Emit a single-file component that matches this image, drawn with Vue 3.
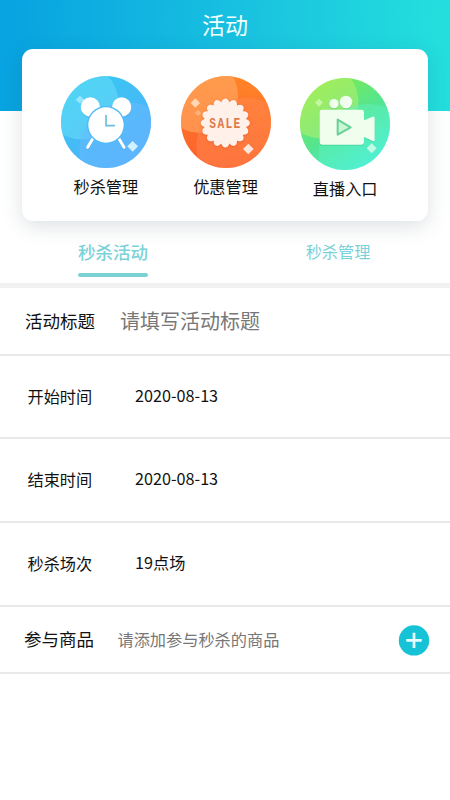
<script setup>
const rows = [
  { label: '开始时间', value: '2020-08-13' },
  { label: '结束时间', value: '2020-08-13' },
  { label: '秒杀场次', value: '19点场' },
]

const cx = 168
const cy = 171
const teeth = 16
const badgePath = (() => {
  const step = (Math.PI * 2) / teeth
  const p = (a, r) => `${(cx + r * Math.sin(a)).toFixed(1)} ${(cy - r * Math.cos(a)).toFixed(1)}`
  let d = `M${p(-step / 2, 63)}`
  for (let i = 0; i < teeth; i++) {
    const a = i * step
    d += `C${p(a - step * 0.24, 78)} ${p(a + step * 0.24, 78)} ${p(a + step / 2, 63)}`
  }
  return d + 'Z'
})()
</script>

<template>
  <div class="page">
    <header class="header">
      <h1 class="title">活动</h1>
    </header>

    <section class="card">
      <div class="entry">
        <svg class="icon" viewBox="33 32 270 276" preserveAspectRatio="none">
          <defs>
            <linearGradient id="blue" x1="0" y1="0" x2=".7" y2="1">
              <stop offset="0" stop-color="#2fcdf0" />
              <stop offset="1" stop-color="#55aefb" />
            </linearGradient>
            <clipPath id="clipA"><ellipse cx="168" cy="170" rx="135" ry="138" /></clipPath>
          </defs>
          <g clip-path="url(#clipA)">
            <rect x="33" y="32" width="270" height="276" fill="url(#blue)" />
            <circle cx="93" cy="110" r="112" fill="#7ae5fb" opacity=".4" />
            <circle cx="233" cy="256" r="145" fill="#67b9ff" opacity=".5" />
          </g>
          <path d="M90 91l13 12-13 12-13-12z" fill="#a5eaff" opacity=".85" />
          <path d="M248 227l16 16-16 16-16-16z" fill="#d1f1ff" />
          <g class="lift-blue">
            <circle cx="121" cy="125" r="29" fill="#fff" />
            <circle cx="215" cy="125" r="29" fill="#fff" />
            <path d="M130 217l-17 29M205 217l17 29" stroke="#fff" stroke-width="9" stroke-linecap="round" />
          </g>
          <circle cx="168" cy="179" r="57" fill="#4fbaf4" />
          <circle cx="168" cy="179" r="53" fill="#fff" />
          <path d="M168 149v32h27" fill="none" stroke="#69bfdc" stroke-width="5" />
        </svg>
        <span class="entry-label">秒杀管理</span>
      </div>

      <div class="entry">
        <svg class="icon" viewBox="35 30 270 276" preserveAspectRatio="none">
          <defs>
            <linearGradient id="orange" x1=".6" y1="0" x2=".5" y2="1">
              <stop offset="0" stop-color="#ff8428" />
              <stop offset="1" stop-color="#fc602c" />
            </linearGradient>
            <clipPath id="clipB"><ellipse cx="170" cy="168" rx="135" ry="138" /></clipPath>
          </defs>
          <g clip-path="url(#clipB)">
            <rect x="35" y="30" width="270" height="276" fill="url(#orange)" />
            <circle cx="93" cy="88" r="113" fill="#ffad67" opacity=".58" />
            <circle cx="228" cy="242" r="147" fill="#ff8750" opacity=".5" />
          </g>
          <path d="M78 97l14 14-14 14-14-14z" fill="#ffe3c8" opacity=".85" />
          <path d="M86 132l10 9-10 9-10-9z" fill="#ffd6b4" opacity=".45" />
          <path d="M237 233l16 16-16 16-16-16z" fill="#ffe6da" />
          <path :d="badgePath" class="lift-orange" fill="#fff1e9" />
          <text transform="translate(120 186) scale(.8 1.1)" class="sale">SALE</text>
        </svg>
        <span class="entry-label">优惠管理</span>
      </div>

      <div class="entry entry-low">
        <svg class="icon" viewBox="30 39 270 276" preserveAspectRatio="none">
          <defs>
            <linearGradient id="green" x1=".15" y1=".1" x2=".75" y2="1">
              <stop offset="0" stop-color="#80eb4c" />
              <stop offset=".5" stop-color="#54e591" />
              <stop offset="1" stop-color="#43efe1" />
            </linearGradient>
            <clipPath id="clipC"><ellipse cx="165" cy="177" rx="135" ry="138" /></clipPath>
          </defs>
          <g clip-path="url(#clipC)">
            <rect x="30" y="39" width="270" height="276" fill="url(#green)" />
            <circle cx="93" cy="108" r="112" fill="#c2f06c" opacity=".48" />
            <circle cx="232" cy="263" r="146" fill="#62f2c6" opacity=".4" />
          </g>
          <path d="M87 101l12 12-12 12-12-12z" fill="#cbf8ac" opacity=".85" />
          <path d="M245 235l15 15-15 15-15-15z" fill="#c1fbe8" />
          <g class="lift-green" fill="#effeed">
            <circle cx="132" cy="116" r="14" />
            <circle cx="168" cy="111" r="19" />
            <path d="M95 134h120q7 0 7 7v25l26-11q6-2 6 5v65q0 6-6 3l-26-12v14q0 9-8 9H96q-7 0-7-7v-91q0-7 6-7z" />
          </g>
          <path d="M143 164v45l39-22z" fill="#c7f8d1" stroke="#69cf98" stroke-width="6" stroke-linejoin="round" />
        </svg>
        <span class="entry-label">直播入口</span>
      </div>
    </section>

    <nav class="tabs">
      <div class="tab active"><span>秒杀活动</span></div>
      <div class="tab"><span>秒杀管理</span></div>
    </nav>

    <main class="form">
      <div class="row row-title">
        <span class="name">活动标题</span>
        <span class="hint">请填写活动标题</span>
      </div>
      <div v-for="row in rows" :key="row.label" class="row row-field">
        <span class="label">{{ row.label }}</span>
        <span class="value">{{ row.value }}</span>
      </div>
      <div class="row row-goods">
        <span class="name">参与商品</span>
        <span class="hint">请添加参与秒杀的商品</span>
        <svg class="add" viewBox="0 0 32 32">
          <circle cx="16" cy="16.4" r="15.2" fill="#16c2d6" />
          <path d="M16 8.7v15.4M8.3 16.4h15.4" stroke="#e6fcff" stroke-width="2.8" />
        </svg>
      </div>
    </main>
  </div>
</template>

<style>
body {
  background: #fff;
}
</style>

<style scoped>
.page {
  width: 450px;
  height: 800px;
  overflow: hidden;
  background: #fff;
  color: #111;
  font-family: "Noto Sans CJK SC", "Noto Sans", sans-serif;
}
.header {
  box-sizing: border-box;
  height: 111px;
  padding-top: 7px;
  background: linear-gradient(92deg, #08a4e1 4%, #18bfe0 50%, #23dedd 96%);
}
.title {
  margin: 0;
  color: #f2ffff;
  font-size: 23px;
  font-weight: 400;
  line-height: 34px;
  text-align: center;
}
.card {
  position: relative;
  box-sizing: border-box;
  display: flex;
  width: 406px;
  height: 172px;
  margin: -62px auto 0;
  padding: 27px 23px 0 24px;
  border-radius: 11px;
  background: #fff;
  box-shadow: 0 5px 20px rgba(50, 75, 90, 0.17);
}
.entry {
  display: flex;
  flex: 1;
  flex-direction: column;
  align-items: center;
}
.entry-low {
  padding-top: 2px;
}
.icon {
  width: 90px;
  height: 92px;
}
.entry-label {
  margin-top: 6px;
  font-size: 16.2px;
  line-height: 24px;
}
.sale {
  fill: #dc7b4b;
  font: bold 42px "Liberation Mono", monospace;
  letter-spacing: 5px;
}
.lift-blue {
  filter: drop-shadow(0 2px 2px rgba(30, 130, 200, 0.35));
}
.lift-orange {
  filter: drop-shadow(0 2px 3px rgba(200, 60, 20, 0.4));
}
.lift-green {
  filter: drop-shadow(0 2px 2px rgba(20, 160, 110, 0.35));
}
.tabs {
  box-sizing: border-box;
  display: flex;
  height: 67px;
  padding-top: 17px;
  border-bottom: 5px solid #f1f1f1;
  color: #7bd1d8;
}
.tab {
  flex: 1;
  padding-left: 1px;
  font-size: 16.2px;
  line-height: 26px;
  text-align: center;
}
.tab.active {
  font-size: 17.5px;
  font-weight: 500;
  line-height: 28px;
}
.tab.active span {
  display: block;
  width: 70px;
  margin: 0 auto;
  white-space: nowrap;
}
.tab.active span::after {
  content: "";
  display: block;
  height: 4px;
  margin-top: 6.5px;
  border-radius: 2px;
  background: #7bd1d6;
}
.row {
  box-sizing: border-box;
  display: flex;
  align-items: center;
  border-bottom: 2px solid #e9e9e9;
}
.row-title {
  height: 68px;
  padding: 0 0 2px 25px;
}
.name {
  width: 95px;
  font-size: 17.5px;
}
.row-title .hint {
  color: #777;
  font-size: 20px;
}
.row-field {
  height: 84px;
  padding: 0 0 2px 27.5px;
}
.row-title + .row-field {
  height: 83px;
}
.label {
  width: 107.5px;
  font-size: 16.2px;
}
.value {
  padding-bottom: 2px;
  font-size: 16.2px;
}
.row-goods {
  height: 67px;
  padding: 0 20px 0 24px;
}
.row-goods .name {
  width: 93.5px;
  padding-bottom: 2px;
}
.row-goods .hint {
  flex: 1;
  padding-bottom: 2px;
  color: #777;
  font-size: 16.2px;
}
.add {
  width: 32px;
  height: 32px;
}
</style>
